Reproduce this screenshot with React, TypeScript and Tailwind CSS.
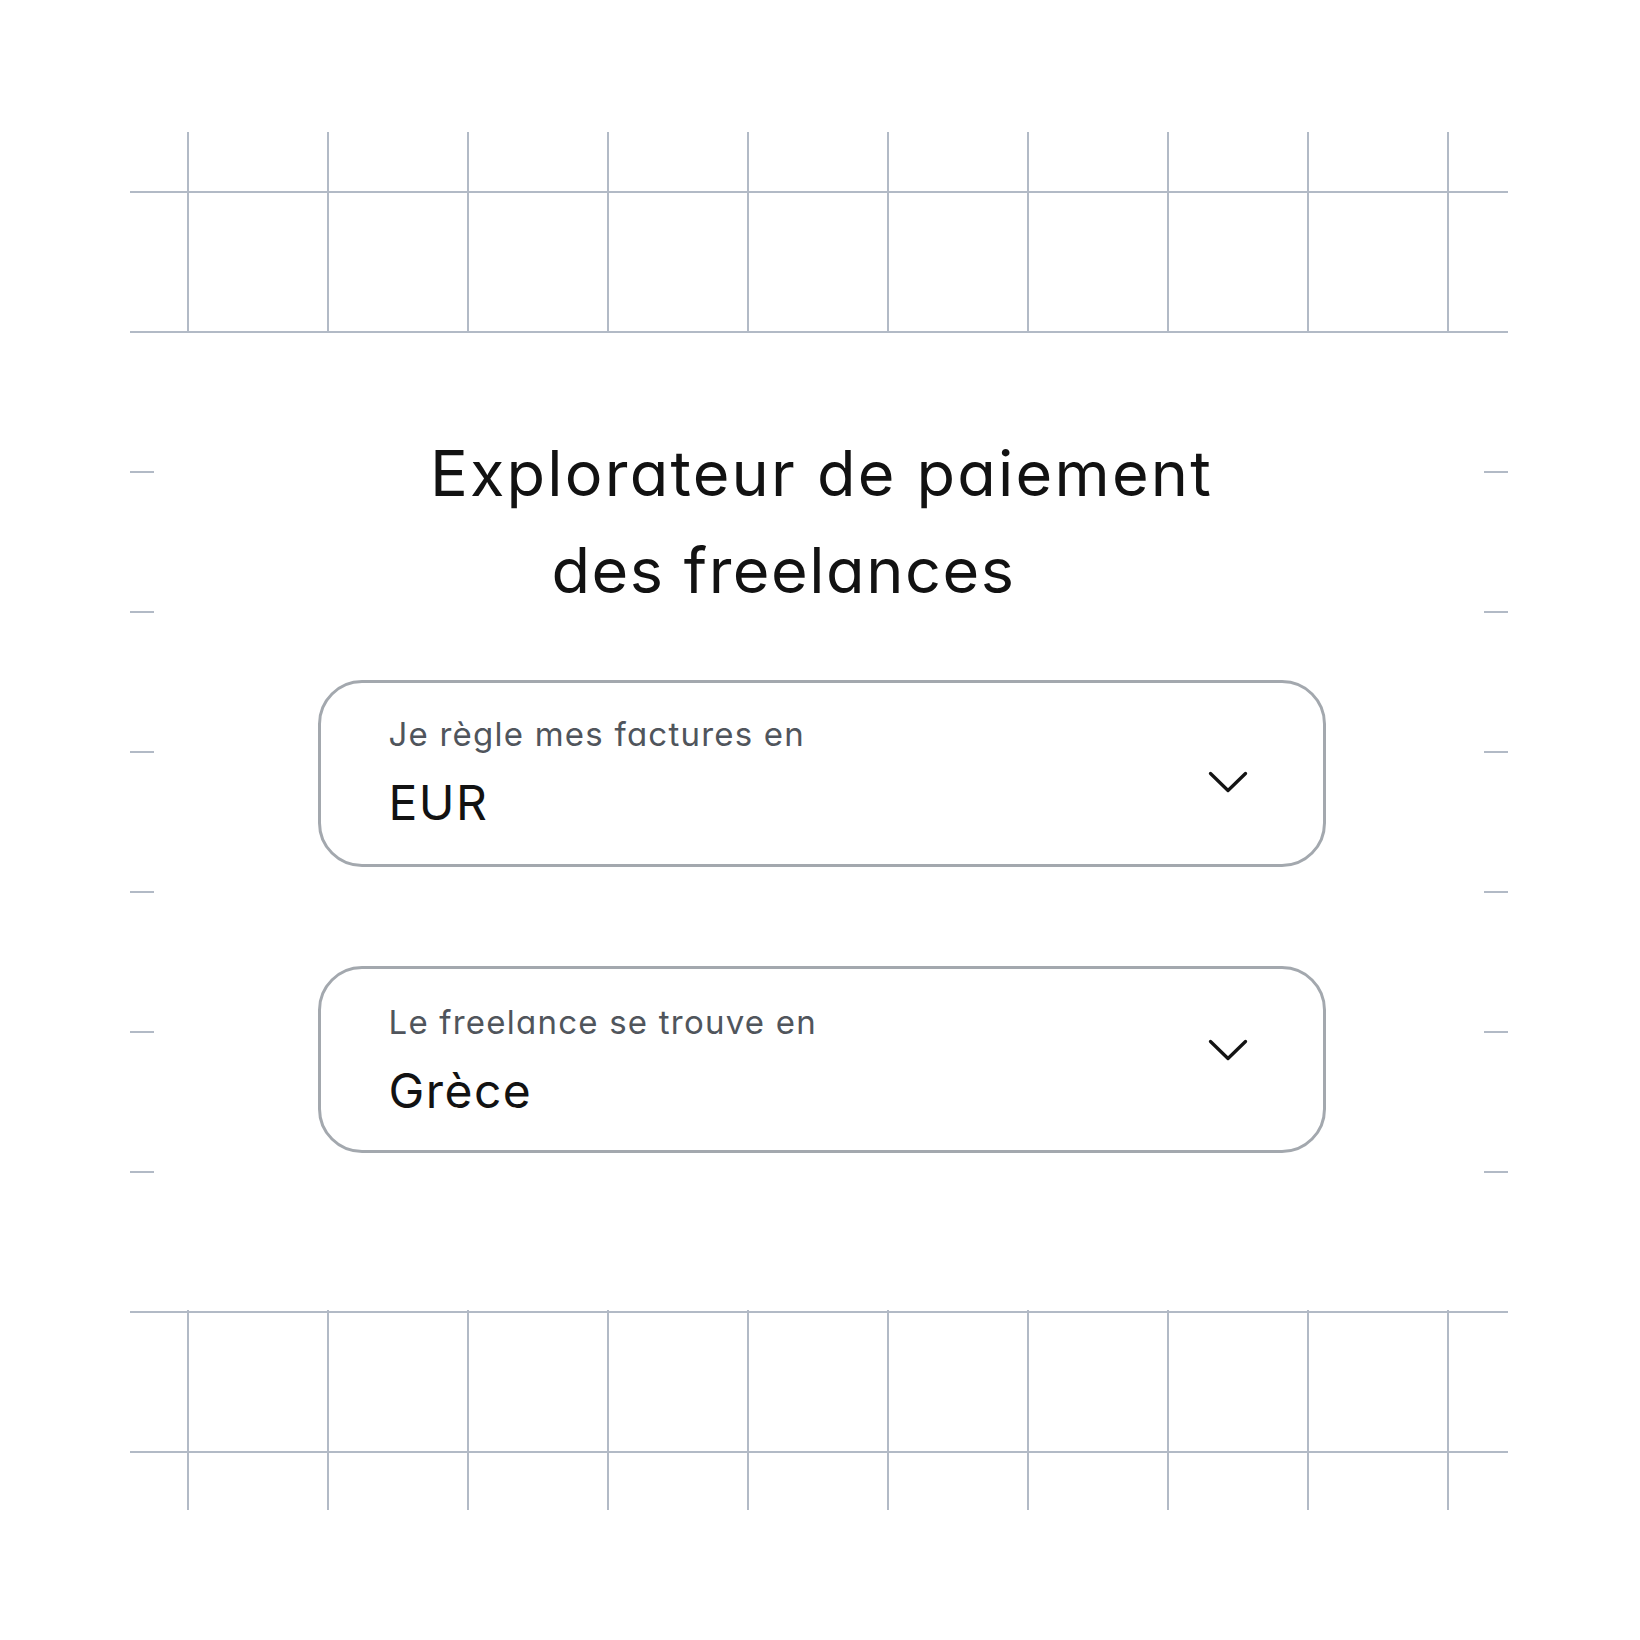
import React from "react";

const XS = [188, 328, 468, 608, 748, 888, 1028, 1168, 1308, 1448];

function GridBand({ h1, h2 }: { h1: number; h2: number }) {
  return (
    <svg width="1640" height="202" viewBox="0 0 1640 202" className="block shrink-0">
      {XS.map((x) => (
        <line key={x} x1={x} y1={1} x2={x} y2={201} stroke="#b2bac6" strokeWidth={2} />
      ))}
      <line x1={130} y1={h1} x2={1508} y2={h1} stroke="#b2bac6" strokeWidth={2} />
      <line x1={130} y1={h2} x2={1508} y2={h2} stroke="#b2bac6" strokeWidth={2} />
    </svg>
  );
}

function Ticks() {
  return (
    <div className="flex w-[24px] flex-col gap-[138px] pt-[138px]">
      {[0, 1, 2, 3, 4, 5].map((i) => (
        <div key={i} className="h-[2px] w-[24px] bg-[#b2bac6]" />
      ))}
    </div>
  );
}

function Chevron() {
  return (
    <svg width="40" height="22" viewBox="0 0 40 22" fill="none" className="block">
      <path d="M2.5 2.5 L20 19.5 L37.5 2.5" stroke="#141414" strokeWidth={3.3} strokeLinecap="round" strokeLinejoin="round" />
    </svg>
  );
}

function SelectBox({
  label,
  value,
  pt,
  gap,
  chevTop,
}: {
  label: string;
  value: string;
  pt: string;
  gap: string;
  chevTop: string;
}) {
  return (
    <div className="flex h-[187px] w-[1008px] flex-row justify-between rounded-[44px] border-[3px] border-[#a3a8ae] bg-white pl-[68px] pr-[75px]">
      <div className={`flex flex-col ${pt} ${gap}`}>
        <div className="text-[33px] leading-[40px] tracking-[0.037em] text-[#50555c]">{label}</div>
        <div className="text-[48px] leading-[58px] tracking-[0.03em] text-[#121212]">{value}</div>
      </div>
      <div className={chevTop}>
        <Chevron />
      </div>
    </div>
  );
}

export default function App() {
  return (
    <div
      className="flex h-[1640px] w-[1640px] flex-col overflow-hidden bg-white pt-[131px] [font-feature-settings:'cv11'] antialiased"
      style={{ fontFamily: "Inter, 'Noto Sans', sans-serif" }}
    >
      <GridBand h1={61} h2={201} />
      <div className="flex h-[976px] shrink-0 flex-row justify-between pl-[130px] pr-[132px]">
        <Ticks />
        <div className="flex flex-col items-center pl-[5px] pt-[92px]">
          <h1 className="flex flex-col items-center text-[63px] font-normal leading-[97px] tracking-[0.035em] text-[#121212]">
            <span>Explorateur de paiement</span>
            <span className="pr-[76px] tracking-[0.024em]">des freelances</span>
          </h1>
          <div className="mt-[61px] flex flex-col gap-[99px]">
            <SelectBox
              label="Je règle mes factures en"
              value="EUR"
              pt="pt-[31px]"
              gap="gap-[20px]"
              chevTop="pt-[88px]"
            />
            <SelectBox
              label="Le freelance se trouve en"
              value="Grèce"
              pt="pt-[33px]"
              gap="gap-[20px]"
              chevTop="pt-[70px]"
            />
          </div>
        </div>
        <Ticks />
      </div>
      <GridBand h1={3} h2={143} />
    </div>
  );
}
